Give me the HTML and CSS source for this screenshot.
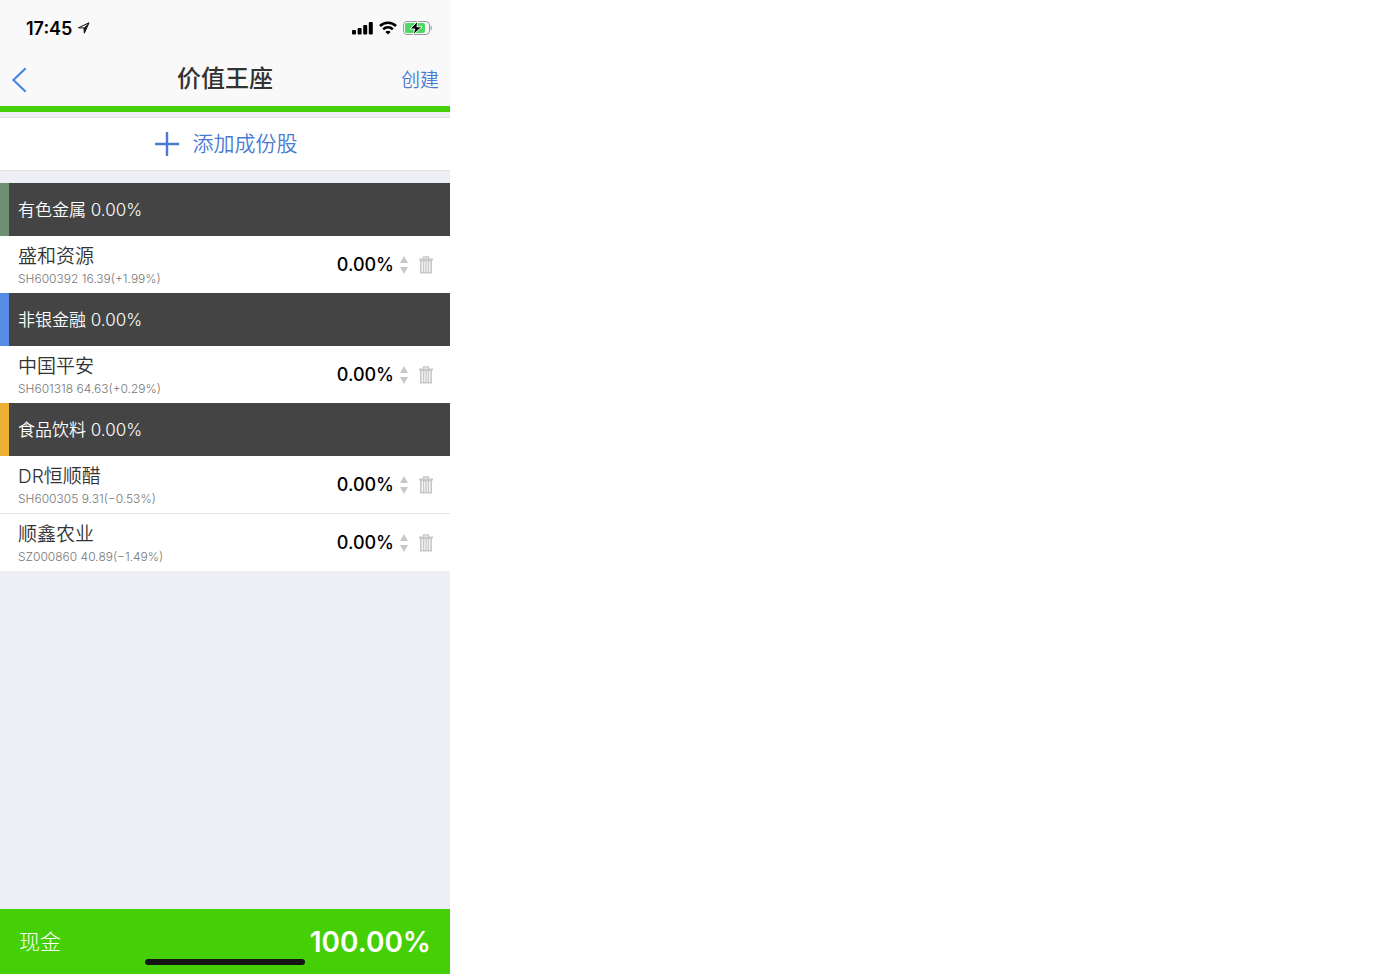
FILE: index.html
```html
<!DOCTYPE html>
<html lang="zh-CN">
<head>
  <meta charset="UTF-8" />
  <meta name="viewport" content="width=device-width, initial-scale=1.0" />
  <title>价值王座</title>
  <link rel="stylesheet" href="styles.css">
</head>

<body>
  <svg class="sprite" aria-hidden="true">
    <symbol id="icon-trash" viewBox="0 0 14 18">
      <path d="M4.500 3V1h5v2" fill="none" stroke="currentColor" stroke-width="1.400" />
      <path d="M0 2.500h14v2H0z" fill="currentColor" />
      <path d="M1.800 4.400h10.400v12.400H1.800z" fill="currentColor" fill-opacity=".15" stroke="currentColor" stroke-width="1.600" />
      <path d="M4.600 5v11M7 5v11M9.400 5v11" stroke="currentColor" stroke-width="1.300" />
    </symbol>
    <symbol id="icon-up" viewBox="0 0 8 7">
      <path d="M4 0l4 7H0z" fill="currentColor" />
    </symbol>
    <symbol id="icon-down" viewBox="0 0 8 7">
      <path d="M0 0h8L4 7z" fill="currentColor" />
    </symbol>
  </svg>

  <div class="app">
    <header class="header">
      <div class="status">
        <span class="status-time">17:45</span>
        <svg class="location" width="13" height="12" viewBox="0 0 13 12">
          <path d="M12 .8L7.300 11.200 7 6 1.400 5.800z" fill="none" stroke="#111" stroke-width="1" />
          <path d="M12 .8L7.300 11.200 7 5.800z" fill="#111" />
        </svg>
        <div class="status-icons">
          <svg width="21" height="14" viewBox="0 0 21 14">
            <rect x="0" y="9" width="4" height="4.500" rx="1" />
            <rect x="5.600" y="7" width="4" height="6.500" rx="1" />
            <rect x="11.200" y="4" width="4" height="9.500" rx="1" />
            <rect x="16.800" y="1" width="4" height="12.500" rx="1" />
          </svg>
          <svg width="18" height="14" viewBox="0 0 18 14">
            <path d="M1 5a11.300 11.300 0 0 1 16 0M4.100 8.300a6.900 6.900 0 0 1 9.800 0" fill="none" stroke="#000" stroke-width="2.500" />
            <path d="M9 13.600l-2.600-2.700a3.800 3.800 0 0 1 5.200 0z" />
          </svg>
          <svg width="29" height="14" viewBox="0 0 29 14">
            <rect x=".5" y=".5" width="26" height="13" rx="3.500" fill="none" stroke="#999" />
            <path d="M27.600 4.600c1.700.6 1.700 4.200 0 4.800z" fill="#999" />
            <rect x="2" y="2" width="20" height="10" rx="2" fill="#4cd964" />
            <path d="M14.800 0L7 8h4.800L9.900 14 19 5.800h-5z" stroke="#fff" stroke-width="1" />
          </svg>
        </div>
      </div>
      <nav class="nav">
        <a class="back" href="#" aria-label="返回">
          <svg width="16" height="26" viewBox="0 0 16 26">
            <path d="M14.700 1.200L2.400 13l12.300 11.800" fill="none" stroke="currentColor" stroke-width="2" />
          </svg>
        </a>
        <h1>价值王座</h1>
        <button type="button" class="create">创建</button>
      </nav>
    </header>

    <main class="content">
      <button type="button" class="add">
        <svg width="24" height="24" viewBox="0 0 24 24">
          <path d="M12 0v24M0 12h24" stroke="currentColor" stroke-width="2.400" />
        </svg>
        添加成份股
      </button>

      <section class="group group-metal">
        <h2>有色金属 0.00%</h2>
        <div class="stock">
          <label class="info" for="w-600392">
            <span class="name">盛和资源</span>
            <span class="quote">SH600392 16.39(+1.99%)</span>
          </label>
          <input type="text" class="weight" id="w-600392" value="0.00%" />
          <div class="stepper">
            <button type="button" aria-label="增加"><svg><use href="#icon-up" /></svg></button>
            <button type="button" aria-label="减少"><svg><use href="#icon-down" /></svg></button>
          </div>
          <button type="button" class="remove" aria-label="删除"><svg><use href="#icon-trash" /></svg></button>
        </div>
      </section>

      <section class="group group-finance">
        <h2>非银金融 0.00%</h2>
        <div class="stock">
          <label class="info" for="w-601318">
            <span class="name">中国平安</span>
            <span class="quote">SH601318 64.63(+0.29%)</span>
          </label>
          <input type="text" class="weight" id="w-601318" value="0.00%" />
          <div class="stepper">
            <button type="button" aria-label="增加"><svg><use href="#icon-up" /></svg></button>
            <button type="button" aria-label="减少"><svg><use href="#icon-down" /></svg></button>
          </div>
          <button type="button" class="remove" aria-label="删除"><svg><use href="#icon-trash" /></svg></button>
        </div>
      </section>

      <section class="group group-food">
        <h2>食品饮料 0.00%</h2>
        <div class="stock">
          <label class="info" for="w-600305">
            <span class="name">DR恒顺醋</span>
            <span class="quote">SH600305 9.31(−0.53%)</span>
          </label>
          <input type="text" class="weight" id="w-600305" value="0.00%" />
          <div class="stepper">
            <button type="button" aria-label="增加"><svg><use href="#icon-up" /></svg></button>
            <button type="button" aria-label="减少"><svg><use href="#icon-down" /></svg></button>
          </div>
          <button type="button" class="remove" aria-label="删除"><svg><use href="#icon-trash" /></svg></button>
        </div>
        <div class="stock">
          <label class="info" for="w-000860">
            <span class="name">顺鑫农业</span>
            <span class="quote">SZ000860 40.89(−1.49%)</span>
          </label>
          <input type="text" class="weight" id="w-000860" value="0.00%" />
          <div class="stepper">
            <button type="button" aria-label="增加"><svg><use href="#icon-up" /></svg></button>
            <button type="button" aria-label="减少"><svg><use href="#icon-down" /></svg></button>
          </div>
          <button type="button" class="remove" aria-label="删除"><svg><use href="#icon-trash" /></svg></button>
        </div>
      </section>
    </main>

    <footer class="cash">
      <span class="cash-label">现金</span>
      <span class="cash-value">100.00%</span>
      <div class="home-bar"></div>
    </footer>
  </div>
</body>
</html>
```
FILE: styles.css
```css
:root {
  --green: #45cf06;
  --blue: #4a7bd4;
  --page: #eeeff5;
  --dark: #444;
  --line: #e2e2e4;
  --icon: #c8c8c8;
}
* { box-sizing: border-box; }
html, body { margin: 0; padding: 0; }
body {
  background: #fff;
  color: #333;
  font-family: Inter, "Noto Sans CJK SC", sans-serif;
}
h1, h2 { margin: 0; }
svg { display: block; }
button, input {
  margin: 0;
  padding: 0;
  border: 0;
  background: none;
  color: inherit;
  font: inherit;
}
button { cursor: pointer; }
.sprite { position: absolute; width: 0; height: 0; }

.app {
  display: flex;
  flex-direction: column;
  max-width: 450px;
  min-height: 100vh;
  background: var(--page);
}

/* header */
.header {
  background: #f9f9f9;
  border-bottom: 6px solid var(--green);
}
.status {
  display: flex;
  align-items: center;
  gap: 5px;
  height: 56px;
  padding: 0 18px 0 26px;
}
.status-time {
  color: #000;
  font-size: 18px;
  font-weight: 600;
}
.status-icons {
  display: flex;
  align-items: center;
  gap: 6px;
  margin-left: auto;
}
.nav {
  display: grid;
  grid-template-columns: 1fr auto 1fr;
  align-items: center;
  height: 50px;
  padding: 0 11px 4px;
}
.nav h1 {
  font-size: 24px;
  font-weight: 500;
  line-height: 36px;
}
.back { justify-self: start; padding-top: 2px; color: #3d82e6; }
.create {
  justify-self: end;
  padding-top: 4px;
  color: var(--blue);
  font-size: 19px;
  font-weight: 350;
  line-height: 26px;
}

/* holdings */
.content { flex: 1; }
.add {
  display: flex;
  align-items: center;
  justify-content: center;
  gap: 14px;
  width: 100%;
  height: 54px;
  margin: 5px 0 12px;
  padding-left: 2px;
  background: #fff;
  border: solid var(--line);
  border-width: 1px 0;
  color: var(--blue);
  font-size: 21px;
  font-weight: 350;
  line-height: 30px;
}
.group h2 {
  height: 53px;
  padding: 1px 9px 0;
  background: var(--dark);
  border-left: 9px solid;
  color: #fff;
  font-size: 17px;
  font-weight: 350;
  line-height: 52px;
}
.group-metal h2 { border-color: #6f8f72; }
.group-finance h2 { border-color: #568be6; }
.group-food h2 { border-color: #ecb035; }
.stock {
  display: flex;
  align-items: center;
  height: 57px;
  padding: 0 17px 0 18px;
  background: #fff;
}
.stock + .stock { height: 58px; border-top: 1px solid var(--line); }
.info { flex: 1; padding-top: 3px; }
.name, .quote { display: block; }
.name { font-size: 19px; font-weight: 350; line-height: 26px; }
.quote { color: #777; font-size: 12px; font-weight: 300; line-height: 18px; }
.weight {
  width: 80px;
  color: #000;
  font-size: 18px;
  font-weight: 500;
  text-align: right;
}
.stepper {
  display: grid;
  gap: 4px;
  margin: 0 11px 0 6px;
  color: var(--icon);
}
.stepper svg { width: 8px; height: 7px; }
.remove { color: var(--icon); }
.remove svg { width: 14px; height: 18px; }

/* cash */
.cash {
  position: relative;
  display: flex;
  align-items: center;
  justify-content: space-between;
  height: 65px;
  padding: 0 19px;
  background: var(--green);
  color: #fff;
}
.cash-label { font-size: 21px; font-weight: 300; line-height: 30px; }
.cash-value { font-size: 28px; font-weight: 600; }
.home-bar {
  position: absolute;
  bottom: 9px;
  left: 50%;
  width: 160px;
  height: 6px;
  border-radius: 3px;
  background: #151515;
  transform: translateX(-50%);
}
```
